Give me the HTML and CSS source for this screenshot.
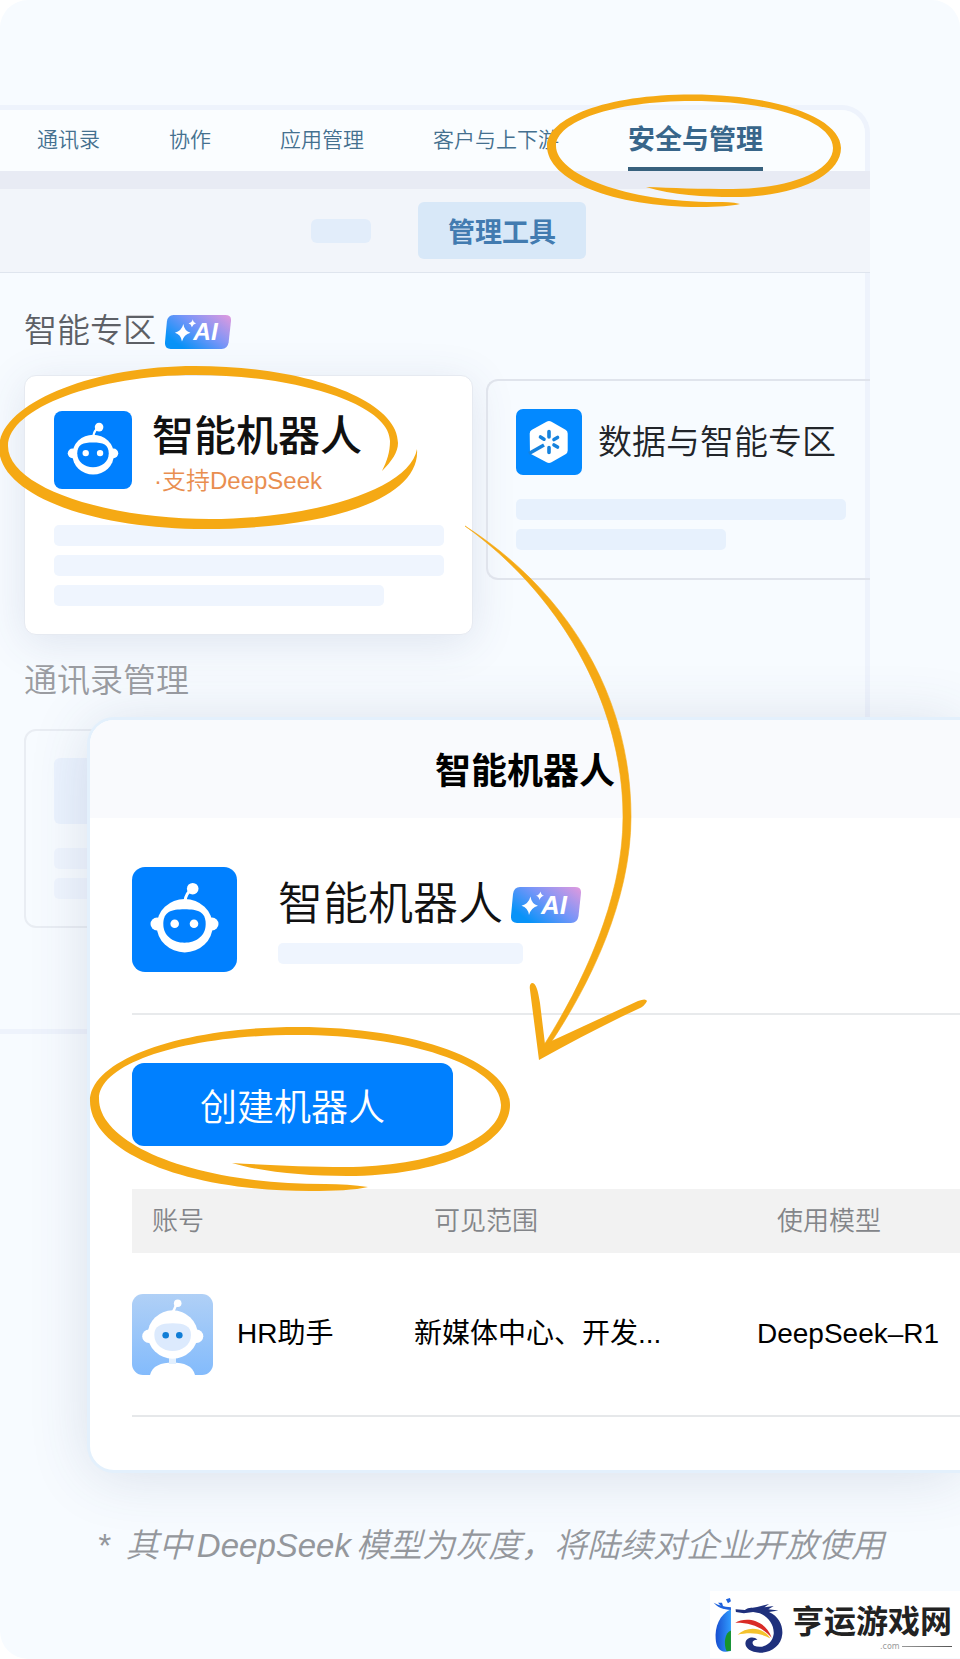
FILE: index.html
```html
<!DOCTYPE html>
<html lang="zh-CN">
<head>
  <meta charset="UTF-8">
  <meta name="viewport" content="width=device-width, initial-scale=1">
  <title>智能机器人</title>
  <link rel="stylesheet" href="styles.css">
</head>
<body>
<!-- 公用图形 -->
<svg class="defs" width="0" height="0" aria-hidden="true">
  <defs>
    <linearGradient id="ai-bg" x1="0" y1="0.8" x2="1" y2="0.1">
      <stop offset="0.1" stop-color="#0893f8"/>
      <stop offset="0.55" stop-color="#7895f8"/>
      <stop offset="1" stop-color="#d899e0"/>
    </linearGradient>
    <linearGradient id="avatar-bg" x1="0" y1="0" x2="0" y2="1">
      <stop offset="0" stop-color="#b0d0f6"/>
      <stop offset="1" stop-color="#83bbfc"/>
    </linearGradient>
    <linearGradient id="body-blue" x1="0" y1="0" x2="1" y2="0">
      <stop offset="0" stop-color="#1a4fd0"/>
      <stop offset="1" stop-color="#2f9bff"/>
    </linearGradient>
    <symbol id="robot" viewBox="0 0 105 105">
      <g fill="#fff">
        <circle cx="60.700" cy="21.700" r="5.800"/>
        <circle cx="25" cy="57" r="6.500"/>
        <circle cx="80" cy="57" r="6.500"/>
        <ellipse cx="52.700" cy="58.700" rx="28" ry="26.700"/>
      </g>
      <path d="M53 34Q54 26 60 22" fill="none" stroke="#fff" stroke-width="3"/>
      <path d="M31.300 57C31.300 45 39 42.300 52.500 42.300S73.700 45 73.700 57C73.700 69 64 75.700 52.500 75.700S31.300 69 31.300 57Z" fill="#0080ff"/>
      <circle cx="42.700" cy="56.700" r="4.300" fill="#fff"/>
      <circle cx="62" cy="56.700" r="4.300" fill="#fff"/>
    </symbol>
    <symbol id="ai" viewBox="0 0 70 36">
      <path d="M9 0H64Q70.500 0 70 6L67.500 29Q66.500 36 60 36H6Q-.5 36 0 29L2 7Q3 0 9 0Z" fill="url(#ai-bg)"/>
      <path d="M19.500 9.500Q20.500 17 27 18.700Q20 20.500 18 28Q17 20.500 10.500 18.700Q17.500 17 19.500 9.500Z" fill="#fff"/>
      <path d="M29.500 4.500Q30 8 33 8.700Q29.500 9.500 28.500 13Q28 9.500 25 8.700Q28.500 8 29.500 4.500Z" fill="#fff"/>
      <text x="30" y="27" class="ai-text">AI</text>
    </symbol>
  </defs>
</svg>

<div class="page">
  <section class="panel">
    <nav class="nav">
      <a href="#">通讯录</a>
      <a href="#">协作</a>
      <a href="#">应用管理</a>
      <a href="#">客户与上下游</a>
      <a href="#" class="active">安全与管理</a>
    </nav>
    <div class="subbar">
      <span class="chip"></span>
      <button class="tool">管理工具</button>
    </div>
    <div class="content">
      <h2>智能专区 <svg class="ai" role="img" aria-label="AI"><use href="#ai"/></svg></h2>
      <div class="cards">
        <div class="card main">
          <div class="card-head">
            <svg class="icon"><rect width="78" height="78" rx="8" fill="#0080ff"/><use href="#robot" width="78" height="78"/></svg>
            <div>
              <h3>智能机器人</h3>
              <p class="support">·支持DeepSeek</p>
            </div>
          </div>
          <div class="bars"><i></i><i></i><i class="w330"></i></div>
        </div>
        <div class="card data">
          <div class="card-head">
            <svg class="icon" viewBox="0 0 66 66">
              <rect width="66" height="66" rx="7" fill="#0389ff"/>
              <path d="M30.500 12.800Q33 11.400 35.500 12.800L49.500 20.700Q51.700 22 51.700 24.500V41.500Q51.700 44 49.500 45.300L35.500 53.200Q33 54.600 30.500 53.200L14 44.500L13.700 24.500Q13.700 22 16 20.700Z" fill="#fff"/>
              <path d="M33 22.500V28M33 38.500V43.500M24.500 28L28 30.200M41.500 28.500L38 30.500M41.500 38L38 36" stroke="#1682dd" stroke-width="3.600" stroke-linecap="round"/>
              <path d="M28 36L13 44.500" stroke="#1682dd" stroke-width="3.600"/>
            </svg>
            <h3>数据与智能专区</h3>
          </div>
          <div class="bars"><i class="w330"></i><i class="w210"></i></div>
        </div>
      </div>
      <h2 class="muted">通讯录管理</h2>
      <div class="card ghost">
        <div class="block"></div>
        <div class="bars"><i></i><i></i></div>
      </div>
    </div>
  </section>

  <section class="modal">
    <header>智能机器人</header>
    <div class="modal-body">
      <div class="app">
        <svg class="app-icon"><rect width="105" height="105" rx="13" fill="#0080ff"/><use href="#robot" width="105" height="105"/></svg>
        <div>
          <h1>智能机器人 <svg class="ai" role="img" aria-label="AI"><use href="#ai"/></svg></h1>
          <div class="bars"><i class="w245"></i></div>
        </div>
      </div>
      <button class="create">创建机器人</button>
      <table>
        <thead>
          <tr><th class="c1">账号</th><th class="c2">可见范围</th><th>使用模型</th></tr>
        </thead>
        <tbody>
          <tr>
            <td>
              <div class="account">
                <svg class="avatar" viewBox="0 0 81 81">
                  <rect width="81" height="81" rx="11" fill="url(#avatar-bg)"/>
                  <path d="M18 81C20 72 29 68.500 40.500 68.500S61 72 63 81Z" fill="#fff"/>
                  <rect x="37" y="63" width="7" height="7" fill="#e3f0fe"/>
                  <circle cx="45.700" cy="9.300" r="3.800" fill="#fff"/>
                  <path d="M41 18L45 9" stroke="#fff" stroke-width="2.500"/>
                  <circle cx="17" cy="42.300" r="6.800" fill="#fff"/>
                  <circle cx="64.500" cy="42.300" r="6.800" fill="#fff"/>
                  <ellipse cx="40.700" cy="40.500" rx="25" ry="24.200" fill="#fff"/>
                  <path d="M22.300 41C22.300 32 29 29.300 40.600 29.300S59 32 59 41C59 51 50 57 40.600 57S22.300 51 22.300 41Z" fill="#dceafd"/>
                  <circle cx="33.700" cy="41.300" r="3.300" fill="#107dd6"/>
                  <circle cx="47.300" cy="41.300" r="3.300" fill="#107dd6"/>
                </svg>
                HR助手
              </div>
            </td>
            <td>新媒体中心、开发...</td>
            <td>DeepSeek–R1</td>
          </tr>
        </tbody>
      </table>
    </div>
  </section>

  <p class="note"><span>*</span><span class="note-text"><span>其中</span><span>DeepSeek</span><span>模型为灰度，将陆续对企业开放使用</span></span></p>

  <footer class="brand">
    <svg class="brand-logo" viewBox="40 50 215 175">
      <path d="M93 90C58 105 44 145 47 180C48 205 60 219 77 218L93 216Z" fill="url(#body-blue)"/>
      <path d="M41 70C52 84 70 90 93 92V84C72 82 55 78 41 70Z" fill="#1f62dc"/>
      <path d="M54 70L72 90L66 70Z" fill="#1f62dc"/>
      <path d="M78 60L90 56L93 66L84 72Z" fill="#1f62dc"/>
      <path d="M93 154C74 160 70 195 80 217L93 215Z" fill="#18942c"/>
      <path d="M107 90L135 92C148 82 160 87 172 83L208 74L194 84L222 80L206 90L236 94L208 98C238 112 250 138 248 165C245 200 215 222 180 221C150 220 134 205 137 190C140 175 162 170 173 182C158 181 154 192 163 200C185 210 218 198 222 165C224 135 204 112 180 102L160 98L132 102L108 98Z" fill="#1f307c"/>
      <path d="M106 131C135 112 195 118 216 176C190 145 150 130 106 131Z" fill="#d92b27"/>
      <path d="M113 167C140 140 190 142 212 178C180 160 145 160 113 167Z" fill="#f4c22d"/>
    </svg>
    <div class="brand-name">
      <strong>亨运游戏网</strong>
      <small>.com</small>
    </div>
  </footer>

  <!-- 手绘标注 -->
  <svg class="marks" width="960" height="1659" aria-hidden="true">
    <path d="M646 187C672 195 705 197 733 197C795 197 841 176 841 148C841 118 777 94.500 692 94.500C605 94.500 547 118 547 146C547 180 612 207 700 207C718 207 732 206 740 204C732 202 725 202 716 202C625 202 556 174 556 146C556 122 612 101 692 101C772 101 833 121 833 148C833 171 790 189 733 189C700 189 672 188 646 187Z"/>
    <path d="M382 471C392 461 398 452 398 443C398 400 306 366 195 366C88 366 -1 405 -1 448C-1 495 92 529 205 529C325 529 421 500 417 449C410 490 310 519 210 519C105 519 8 487 8 446C8 408 98 375 195 375C300 375 390 405 390 441C390 452 387 461 382 471Z"/>
    <path d="M465 526C562 588 631 690 631 817C631 900 590 985 548 1047L544 1045C582 985 623 900 623 817C623 700 557 592 465 526Z" stroke="#f5a914" stroke-width=".6" stroke-linejoin="round"/>
    <path d="M532 983C536 983 538 990 540 1003L545 1044L638 1001Q646 998 647 1001Q645 1006 638 1009C605 1024 572 1042 539 1060L530 990Q529 984 532 983Z"/>
    <path d="M232 1163C262 1172 305 1176 347 1176C440 1176 510 1145 510 1105C510 1061 415 1027 298 1027C180 1027 90 1060 90 1101C90 1150 180 1191 310 1191C335 1191 355 1190 368 1187C355 1185 340 1184 325 1184C190 1184 99 1143 99 1099C99 1063 185 1035 298 1035C405 1035 501 1064 501 1105C501 1140 430 1167 345 1167C305 1167 265 1165 232 1163Z"/>
  </svg>
</div>
</body>
</html>
```
FILE: styles.css
```css
* {
  box-sizing: border-box;
}

body {
  margin: 0;
  background: #fff;
  font-family: "Liberation Sans", "Noto Sans CJK SC", sans-serif;
  font-weight: 350;
  color: #111;
}

h1, h2, h3, p {
  margin: 0;
  font-weight: 350;
}

button {
  border: none;
  font-family: inherit;
  font-weight: 350;
  cursor: pointer;
}

.defs {
  position: absolute;
}

.page {
  position: relative;
  display: flex;
  flex-direction: column;
  min-height: 100vh;
  padding-top: 105px;
  background: #f7fbff;
  border-radius: 28px 28px 0 28px;
  overflow: hidden;
}

/* 后面的管理后台 */
.panel {
  margin-right: 90px;
  border: 5px solid #eef3fc;
  border-left: none;
  border-radius: 0 28px 0 0;
}

.nav {
  display: flex;
  gap: 69px;
  height: 61px;
  padding-left: 37px;
  background: #fafdff;
  border-radius: 0 24px 0 0;
}

.nav a {
  color: #44708f;
  font-size: 21px;
  line-height: 60px;
  text-decoration: none;
  white-space: nowrap;
}

.nav a.active {
  border-bottom: 4px solid #37617d;
  color: #38668a;
  font-size: 27px;
  font-weight: 700;
  line-height: 60px;
}

.subbar {
  display: flex;
  align-items: center;
  gap: 47px;
  height: 102px;
  margin-right: -5px;
  padding-left: 311px;
  background: #f2f5fa;
  border-top: 18px solid #e8ebf4;
  border-bottom: 1px solid #dfe5ee;
}

.chip {
  width: 60px;
  height: 24px;
  border-radius: 6px;
  background: #e2edfa;
}

.tool {
  width: 168px;
  height: 57px;
  border-radius: 6px;
  background: #d8e8f8;
  color: #427bb0;
  font-size: 27px;
  font-weight: 700;
}

.content {
  padding: 40px 0 101px 24px;
}

h2 {
  display: flex;
  align-items: center;
  gap: 9px;
  color: #5d6066;
  font-size: 33px;
  line-height: 36px;
}

h2.muted {
  margin: 28px 0 30px;
  color: #9a9ca1;
}

.ai {
  width: 66px;
  height: 34px;
}

h2 .ai {
  margin-top: 2px;
}

.ai-text {
  fill: #fff;
  font: italic bold 26px "Liberation Sans", sans-serif;
}

.cards {
  display: flex;
  align-items: flex-start;
  gap: 13px;
  margin-top: 26px;
}

.card {
  border: 2px solid #e0e4ec;
  border-radius: 12px;
}

.card.main {
  flex: 0 0 449px;
  padding: 35px 28px 28px 29px;
  border: 1px solid #e6eaf1;
  background: #fff;
  box-shadow: 0 8px 44px rgba(60, 75, 130, 0.13);
}

.card.data {
  flex: 1;
  margin: 4px -5px 0 0;
  padding: 28px 0 28px 28px;
  border-right: none;
  border-radius: 12px 0 0 12px;
}

.card.ghost {
  padding: 27px 28px;
  border-color: #e9edf3;
}

.card-head {
  display: flex;
}

.main .card-head {
  gap: 20px;
  margin-bottom: 26px;
}

.main .icon {
  width: 78px;
  height: 78px;
}

.main h3 {
  font-size: 42px;
  font-weight: 500;
  line-height: 52px;
}

.support {
  padding-left: 2px;
  color: #e98e50;
  font-size: 24px;
  line-height: 36px;
}

.data .card-head {
  align-items: center;
  gap: 16px;
  margin-bottom: 24px;
}

.data .icon {
  width: 66px;
  height: 66px;
}

.data h3 {
  color: #22252a;
  font-size: 34px;
  line-height: 36px;
  white-space: nowrap;
}

/* 占位条 */
.bars {
  display: flex;
  flex-direction: column;
  gap: 9px;
}

.bars i {
  height: 21px;
  border-radius: 5px;
  background: #eff5fe;
}

.data .bars i {
  background: #e7f1fd;
}

.bars .w330 { width: 330px; }
.bars .w210 { width: 210px; }
.bars .w245 { width: 245px; }

.ghost .block {
  width: 66px;
  height: 66px;
  margin-bottom: 24px;
  border-radius: 6px;
  background: #ebf3fe;
}

/* 前面的机器人弹窗 */
.modal {
  position: relative;
  margin: -314px 0 0 90px;
  background: #fff;
  border-radius: 24px 0 0 24px;
  box-shadow: 0 0 0 3px #e3f0fc, 0 4px 60px rgba(60, 80, 120, 0.17);
}

.modal header {
  height: 98px;
  border-radius: 24px 0 0 0;
  background: #f9fafd;
  color: #000;
  font-size: 36px;
  font-weight: 700;
  line-height: 104px;
  text-align: center;
}

.modal-body {
  padding: 49px 0 53px 42px;
}

.app {
  display: flex;
  gap: 41px;
  padding-bottom: 41px;
  border-bottom: 2px solid #e8eaec;
}

.app-icon {
  width: 105px;
  height: 105px;
}

.app h1 {
  display: flex;
  align-items: center;
  gap: 8px;
  margin: 8px 0;
  font-size: 45px;
  line-height: 60px;
}

.app .ai {
  width: 70px;
  height: 36px;
}

.create {
  display: block;
  width: 321px;
  height: 83px;
  margin: 48px 0 43px;
  border-radius: 12px;
  background: #0080ff;
  color: #fff;
  font-size: 37px;
}

table {
  width: 100%;
  border-collapse: collapse;
  table-layout: fixed;
}

th {
  height: 64px;
  padding: 0 0 0 20px;
  background: #f2f2f2;
  color: #838589;
  font-size: 26px;
  font-weight: 350;
  line-height: 36px;
  text-align: left;
}

.c1 { width: 282px; }
.c2 { width: 343px; }

td {
  height: 163px;
  padding: 0;
  border-bottom: 2px solid #e6e8ea;
  color: #000;
  font-size: 28px;
  font-weight: 400;
  line-height: 42px;
  white-space: nowrap;
}

.account {
  display: flex;
  align-items: center;
  gap: 24px;
}

.avatar {
  width: 81px;
  height: 81px;
}

.note {
  display: flex;
  gap: 16px;
  margin: 52px 0 21px 97px;
  color: #94979c;
  font-size: 33px;
  font-style: italic;
  line-height: 48px;
  white-space: nowrap;
}

.note-text {
  display: flex;
  gap: 5px;
}

.brand {
  display: flex;
  align-items: center;
  align-self: flex-end;
  gap: 7px;
  width: 250px;
  height: 67px;
  padding-left: 3px;
  background: #fff;
}

.brand-logo {
  width: 72px;
  height: 58px;
}

.brand-name strong {
  display: block;
  padding-top: 4px;
  color: #222;
  font-size: 32px;
  font-weight: 700;
  line-height: 40px;
  white-space: nowrap;
}

.brand-name small {
  display: flex;
  align-items: center;
  gap: 2px;
  padding-left: 88px;
  color: #999;
  font: 8px "DejaVu Sans", sans-serif;
}

.brand-name small::after {
  content: "";
  flex: 1;
  height: 1px;
  background: linear-gradient(90deg, #999, #555);
}

.marks {
  position: absolute;
  top: 0;
  left: 0;
  fill: #f5a914;
  pointer-events: none;
}
```
